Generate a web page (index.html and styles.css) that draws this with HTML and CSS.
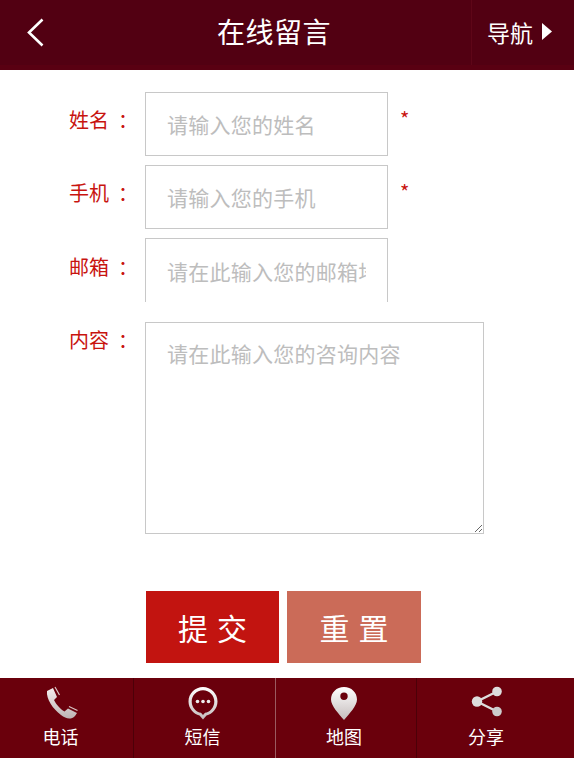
FILE: index.html
```html
<!DOCTYPE html>
<html lang="zh-CN">
<head>
<meta charset="utf-8">
<title>在线留言</title>
<link rel="stylesheet" href="styles.css">
</head>
<body>
<header class="top">
  <a class="back" href="#" aria-label="返回">
    <svg width="19" height="29" viewBox="0 0 19 29"><path d="M16.500 1.500 3 14.500 16.500 27.500" fill="none" stroke="#fff" stroke-width="2.600"/></svg>
  </a>
  <h1 class="title">在线留言</h1>
  <a class="nav" href="#">导航<svg width="10" height="17" viewBox="0 0 10 17"><path d="M0 0 10 8.500 0 17Z" fill="#fff"/></svg></a>
</header>
<form class="form">
  <div class="row">
    <label class="label">姓名<span class="colon">：</span></label>
    <input class="input" type="text" placeholder="请输入您的姓名">
    <span class="req">*</span>
  </div>
  <div class="row">
    <label class="label">手机<span class="colon">：</span></label>
    <input class="input" type="text" placeholder="请输入您的手机">
    <span class="req">*</span>
  </div>
  <div class="row row-clip">
    <label class="label label-mail">邮箱<span class="colon">：</span></label>
    <div class="clip"><input class="input input-tall" type="text" placeholder="请在此输入您的邮箱地址"></div>
  </div>
  <div class="row row-area">
    <label class="label label-area">内容<span class="colon">：</span></label>
    <textarea class="area" placeholder="请在此输入您的咨询内容"></textarea>
  </div>
  <div class="actions">
    <button class="btn btn-submit" type="button">提交</button>
    <button class="btn btn-reset" type="reset">重置</button>
  </div>
</form>
<footer class="bar">
  <div class="bar-inner">
    <a class="cell" href="#">
      <svg class="ico" width="34" height="34" viewBox="0 0 34 34"><defs><linearGradient id="g1" x1="0" y1="0" x2="0" y2="1"><stop offset="0" stop-color="#f4eeee"/><stop offset="1" stop-color="#bdb4b4"/></linearGradient></defs><path d="M3 5 9 2 13 11 10 14C12 18 16 23 20.500 25.500L24 22.500 33 27 31 30C27 34 22 33 17 29 9 23 2 13 3 5Z" fill="url(#g1)"/><path d="M11 1 15.500 9M25 20.500 33.500 24.500" stroke="#d9c4c4" stroke-width="1.200" fill="none"/></svg>
      <span>电话</span>
    </a>
    <a class="cell" href="#">
      <svg class="ico" width="34" height="34" viewBox="0 0 34 34"><defs><linearGradient id="g2" x1="0" y1="0" x2="0" y2="1"><stop offset="0" stop-color="#fff"/><stop offset="1" stop-color="#c4bcbc"/></linearGradient></defs><path fill-rule="evenodd" d="M17 1C9 1 2.500 7.500 2.500 15.500 2.500 22.500 7.500 28 13.500 29.500L17 33.500 20.500 29.500C26.500 28 31.500 22.500 31.500 15.500 31.500 7.500 25 1 17 1ZM17 4.200C23.500 4.200 28.300 9.500 28.300 15.500S23.500 26.500 19 26.800L17 29 15 26.800C10.500 26.500 5.700 21.500 5.700 15.500S10.500 4.200 17 4.200Z" fill="url(#g2)"/><circle cx="11.500" cy="15.500" r="1.800" fill="#eee"/><circle cx="17" cy="15.500" r="1.800" fill="#eee"/><circle cx="22.500" cy="15.500" r="1.800" fill="#eee"/></svg>
      <span>短信</span>
    </a>
    <a class="cell" href="#">
      <svg class="ico" width="34" height="34" viewBox="0 0 34 34"><defs><linearGradient id="g3" x1="0" y1="0" x2="0" y2="1"><stop offset="0" stop-color="#fff"/><stop offset="1" stop-color="#c4bcbc"/></linearGradient></defs><path fill-rule="evenodd" d="M17 1C9.500 1 4 6.500 4 13.500 4 20 12 28 17 34 22 28 30 20 30 13.500 30 6.500 24.500 1 17 1ZM17 6.500A3.700 3.700 0 1 1 17 13.900 3.700 3.700 0 0 1 17 6.500Z" fill="url(#g3)"/></svg>
      <span>地图</span>
    </a>
    <a class="cell" href="#">
      <svg class="ico" width="34" height="34" viewBox="0 0 34 34"><path d="M28 5.500 8 15.500 28 25.500" fill="none" stroke="#ddd" stroke-width="2.400"/><circle cx="28" cy="5.500" r="4.800" fill="#ddd"/><circle cx="8" cy="15.500" r="5.200" fill="#ddd"/><circle cx="28" cy="25.500" r="4.800" fill="#ccc"/></svg>
      <span>分享</span>
    </a>
  </div>
</footer>
</body>
</html>
```
FILE: styles.css
```css
* { box-sizing: border-box; }
html, body { margin: 0; padding: 0; }
body {
  width: 574px;
  height: 758px;
  overflow: hidden;
  background: #fff;
  font-family: "Noto Sans CJK SC", "Liberation Sans", sans-serif;
}
a { color: inherit; text-decoration: none; }

.top {
  display: flex;
  align-items: center;
  height: 70px;
  background: #520012;
  color: #fff;
  border-bottom: 5px solid #590012;
}
.back {
  display: flex;
  flex: 0 0 80px;
  padding-left: 26px;
}
.title {
  flex: 1;
  margin: 0;
  padding: 0 3px 2px 0;
  text-align: center;
  font-size: 28px;
  font-weight: 400;
  letter-spacing: .5px;
  line-height: 63px;
}
.nav {
  display: flex;
  align-items: center;
  gap: 9px;
  flex: 0 0 103px;
  height: 100%;
  padding: 0 0 2px 15px;
  border-left: 1px solid #5e0618;
  font-size: 23px;
}

.form {
  display: block;
  padding: 22px 0 0 0;
}
.row {
  display: flex;
  align-items: flex-start;
  margin-bottom: 9px;
}
.row-clip { margin-bottom: 20px; }
.row-area { margin-bottom: 57px; }
.label {
  flex: 0 0 145px;
  padding: 13px 0 0 69px;
  font-size: 20px;
  line-height: 30px;
  color: #c8140f;
  white-space: nowrap;
}
.label-mail { padding-top: 14px; }
.label-area { padding-top: 3px; }
.colon {
  margin-left: 9px;
  font-family: "Noto Sans CJK TC", "Liberation Sans", sans-serif;
}
.input {
  display: block;
  width: 243px;
  height: 64px;
  padding: 0 21px;
  border: 1px solid #c8c8c8;
  border-radius: 0;
  background: #fff;
  font: 400 21px "Noto Sans CJK SC", "Liberation Sans", sans-serif;
  letter-spacing: .25px;
  color: #333;
  outline: none;
}
.input-tall { height: 66px; }
.clip { height: 64px; overflow: hidden; }
.input::placeholder, .area::placeholder { color: #bdbdbd; opacity: 1; }
.req {
  margin: 12px 0 0 12px;
  font-size: 20px;
  line-height: 30px;
  color: #c8140f;
}
.area {
  display: block;
  width: 339px;
  height: 212px;
  padding: 15px 21px;
  border: 1px solid #c8c8c8;
  border-radius: 0;
  background: #fff;
  font: 400 21px/30px "Noto Sans CJK SC", "Liberation Sans", sans-serif;
  letter-spacing: .25px;
  color: #333;
  outline: none;
}

.actions {
  display: flex;
  gap: 8px;
  padding-left: 146px;
}
.btn {
  height: 72px;
  padding: 0 0 0 9px;
  border: 0;
  border-radius: 0;
  font: 400 30px "Noto Sans CJK SC", "Liberation Sans", sans-serif;
  letter-spacing: 9px;
  color: #fff;
}
.btn-submit { width: 133px; background: #c21410; }
.btn-reset { width: 134px; background: #cb6b58; }

.bar {
  height: 80px;
  margin-top: 15px;
  background: #6a000c;
  overflow: hidden;
}
.bar-inner {
  display: flex;
  height: 100%;
  margin-left: -8px;
}
.cell {
  display: flex;
  flex: 0 0 142px;
  flex-direction: column;
  align-items: center;
  padding: 8px 4px 0 0;
  color: #fff;
  font-size: 18px;
  line-height: 26px;
  border-right: 1px solid #4c0008;
}
.cell:nth-child(2) { border-right-color: #9a5a60; }
.cell:nth-child(3) { flex-basis: 141px; }
.cell:last-child { border-right: 0; }
.ico { display: block; margin-bottom: 3px; }
```
